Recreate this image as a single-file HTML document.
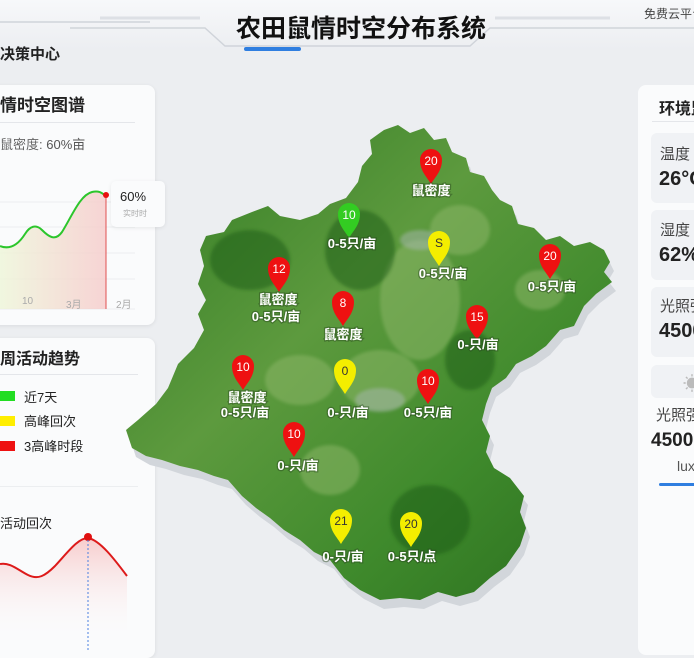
<!DOCTYPE html>
<html><head><meta charset="utf-8"><style>
*{margin:0;padding:0;box-sizing:border-box}
body{width:694px;height:650px;overflow:hidden;background:#eceef1;font-family:"Liberation Sans","Noto Sans CJK SC",sans-serif;position:relative;color:#222}
.abs{position:absolute;white-space:nowrap}
.card{position:absolute;background:#fafbfc;border-radius:8px;box-shadow:0 1px 4px rgba(0,0,0,.08)}
.t{font-weight:bold}
#rp{position:absolute;left:638px;top:85px;width:56px;height:570px;overflow:hidden}
#rp div{position:absolute;white-space:nowrap}
</style></head><body>
<!-- header -->
<div class="abs" style="left:0;top:0;width:694px;height:50px;background:linear-gradient(#f7f8fa,#eceef1)"></div>
<svg class="abs" style="left:0;top:0" width="694" height="60">
<path d="M0 22 H150 M70 28 H205 L225 46 H470 L490 28 H694" fill="none" stroke="#d0d4da" stroke-width="1.5"/>
<path d="M100 18 H200 M495 18 H610" stroke="#dde0e5" stroke-width="3"/>
<rect x="244" y="47" width="57" height="4" rx="2" fill="#2f7ee0"/>
</svg>
<div class="abs t" style="left:236px;top:9px;font-size:25px;color:#111">农田鼠情时空分布系统</div>
<div class="abs" style="left:644px;top:5px;font-size:12px;color:#444">免费云平台</div>
<div class="abs t" style="left:0;top:43px;font-size:15px">决策中心</div>

<!-- left card 1 -->
<div class="card" style="left:-10px;top:85px;width:165px;height:240px"></div>
<div class="abs t" style="left:0;top:91px;font-size:17px">情时空图谱</div>
<div class="abs" style="left:0;top:122px;width:135px;height:1px;background:#e4e6ea"></div>
<div class="abs" style="left:0;top:134px;font-size:13px;color:#666">鼠密度: <span style="color:#555">60%亩</span></div>
<svg class="abs" style="left:0;top:180px" width="160" height="130">
<defs><linearGradient id="g1" x1="0" x2="1"><stop offset="0" stop-color="#eef6d8"/><stop offset="1" stop-color="#f6caca"/></linearGradient></defs>
<g stroke="#eceef0"><line x1="0" y1="22" x2="135" y2="22"/><line x1="0" y1="47" x2="135" y2="47"/><line x1="0" y1="73" x2="135" y2="73"/><line x1="0" y1="99" x2="135" y2="99"/><line x1="0" y1="129" x2="135" y2="129"/></g>
<path d="M0 66 C10 70 18 65 25 54 C30 46 36 44 42 50 C48 56 55 62 62 52 C72 36 80 15 92 12 C100 10 103 14 106 16 V129 H0Z" fill="url(#g1)" opacity=".8"/>
<path d="M0 66 C10 70 18 65 25 54 C30 46 36 44 42 50 C48 56 55 62 62 52 C72 36 80 15 92 12 C100 10 103 14 106 16" fill="none" stroke="#2cc62c" stroke-width="2"/>
<line x1="106" y1="16" x2="106" y2="129" stroke="#e05050"/>
<circle cx="106" cy="15" r="3" fill="#e81010"/>
</svg>
<div class="card" style="left:111px;top:181px;width:54px;height:46px;border-radius:5px"></div>
<div class="abs" style="left:120px;top:189px;font-size:13px">60%</div>
<div class="abs" style="left:123px;top:208px;font-size:8px;color:#aaa">实时时</div>
<div class="abs" style="left:22px;top:296px;font-size:10px;color:#aaa">10</div>
<div class="abs" style="left:66px;top:296px;font-size:10px;color:#aaa">3月</div>
<div class="abs" style="left:116px;top:296px;font-size:10px;color:#aaa">2月</div>

<!-- left card 2 -->
<div class="card" style="left:-10px;top:338px;width:165px;height:320px"></div>
<div class="abs t" style="left:0;top:345px;font-size:16px">周活动趋势</div>
<div class="abs" style="left:0;top:374px;width:138px;height:1px;background:#e4e6ea"></div>
<div class="abs" style="left:0;top:391px;width:15px;height:10px;background:#22dd22"></div>
<div class="abs" style="left:24px;top:387px;font-size:13px">近7天</div>
<div class="abs" style="left:0;top:416px;width:15px;height:10px;background:#ffee00"></div>
<div class="abs" style="left:24px;top:411px;font-size:13px">高峰回次</div>
<div class="abs" style="left:0;top:441px;width:15px;height:10px;background:#ee1111"></div>
<div class="abs" style="left:24px;top:436px;font-size:13px">3高峰时段</div>
<div class="abs" style="left:0;top:486px;width:138px;height:1px;background:#eceef0"></div>
<div class="abs" style="left:0;top:513px;font-size:13px">活动回次</div>
<svg class="abs" style="left:0;top:530px" width="140" height="120">
<defs><linearGradient id="g2" x1="0" y1="0" x2="0" y2="1"><stop offset="0" stop-color="#f8cccc"/><stop offset="1" stop-color="#fafbfc" stop-opacity="0"/></linearGradient></defs>
<path d="M0 34 C10 32 18 40 28 45 C38 50 45 46 55 36 C68 22 78 8 88 8 C100 10 115 30 127 46 V110 H0Z" fill="url(#g2)"/>
<path d="M0 34 C10 32 18 40 28 45 C38 50 45 46 55 36 C68 22 78 8 88 8 C100 10 115 30 127 46" fill="none" stroke="#dd1a1a" stroke-width="2"/>
<circle cx="88" cy="7" r="4" fill="#e01010"/>
<line x1="88" y1="10" x2="88" y2="120" stroke="#4a80e0" stroke-dasharray="2 2"/>
</svg>

<!-- right panel -->
<div id="rp">
<div style="left:0;top:0;width:70px;height:570px;background:#fafbfc;border-radius:8px"></div>
<div class="t" style="left:21px;top:10px;font-size:16px">环境监测</div>
<div style="left:14px;top:36px;width:60px;height:1px;background:#e4e6ea"></div>
<div style="left:13px;top:48px;width:60px;height:70px;background:#f0f2f5;border-radius:6px"></div>
<div style="left:22px;top:58px;font-size:15px;color:#444">温度</div>
<div class="t" style="left:21px;top:83px;font-size:20px">26°C</div>
<div style="left:13px;top:125px;width:60px;height:70px;background:#f0f2f5;border-radius:6px"></div>
<div style="left:22px;top:134px;font-size:15px;color:#444">湿度</div>
<div class="t" style="left:21px;top:159px;font-size:20px">62%</div>
<div style="left:13px;top:202px;width:60px;height:70px;background:#f0f2f5;border-radius:6px"></div>
<div style="left:22px;top:210px;font-size:15px;color:#444">光照强度</div>
<div class="t" style="left:21px;top:235px;font-size:20px">4500</div>
<div style="left:13px;top:280px;width:60px;height:33px;background:#f0f2f5;border-radius:6px"></div>
<div style="left:45px;top:285px;font-size:18px;color:#bbb">☀</div>
<div style="left:18px;top:319px;font-size:15px;color:#444">光照强度</div>
<div class="t" style="left:13px;top:345px;font-size:19px">4500</div>
<div style="left:39px;top:373px;font-size:14px;color:#555">lux</div>
<div style="left:21px;top:398px;width:40px;height:3px;background:#2f7ee0;border-radius:2px"></div>
</div>

<!-- map -->
<svg class="abs" style="left:0;top:0" width="694" height="650">
<defs>
<linearGradient id="mg" x1="0" y1="0" x2="1" y2="1"><stop offset="0" stop-color="#2f7a22"/><stop offset=".4" stop-color="#5d9a3e"/><stop offset=".7" stop-color="#3f8a2c"/><stop offset="1" stop-color="#2a6e1e"/></linearGradient>
<filter id="sh"><feGaussianBlur stdDeviation="1.5"/></filter>
<path id="outl" d="M398 125 L410 133 L424 128 L434 140 L446 138 L452 152 L466 158 L470 172 L484 176 L492 190 L500 200 L512 206 L518 224 L534 228 L546 240 L560 236 L574 246 L590 242 L604 250 L610 262 L604 272 L612 282 L596 294 L584 306 L574 326 L560 330 L546 346 L532 356 L516 364 L506 378 L492 388 L486 404 L482 420 L490 436 L486 452 L494 468 L510 478 L524 496 L520 512 L526 528 L520 546 L506 566 L490 578 L474 592 L456 597 L438 592 L420 600 L400 598 L380 600 L360 590 L344 578 L330 560 L314 552 L300 540 L284 530 L270 518 L256 508 L242 496 L228 480 L214 476 L198 470 L180 466 L162 460 L146 456 L132 448 L126 430 L138 420 L156 404 L168 388 L178 364 L194 348 L204 330 L198 314 L206 300 L198 284 L204 266 L200 250 L206 236 L224 232 L232 220 L252 212 L268 206 L280 216 L300 220 L318 214 L330 204 L346 198 L358 182 L362 166 L372 154 L370 140 L384 130Z"/>
</defs>
<use href="#outl" fill="#d2d6db" transform="translate(4,9)"/>
<use href="#outl" fill="url(#mg)"/>
<g fill="#8fb86a" opacity=".5" filter="url(#sh)">
<ellipse cx="420" cy="300" rx="40" ry="60"/><ellipse cx="380" cy="380" rx="40" ry="30"/><ellipse cx="460" cy="230" rx="30" ry="25"/><ellipse cx="300" cy="380" rx="35" ry="25"/><ellipse cx="540" cy="290" rx="25" ry="20"/><ellipse cx="330" cy="470" rx="30" ry="25"/>
</g>
<g fill="#a8b8b0" opacity=".5" filter="url(#sh)"><ellipse cx="380" cy="400" rx="25" ry="12"/><ellipse cx="420" cy="240" rx="20" ry="10"/></g>
<g fill="#1f5c16" opacity=".5" filter="url(#sh)"><ellipse cx="250" cy="260" rx="40" ry="30"/><ellipse cx="360" cy="250" rx="35" ry="40"/><ellipse cx="430" cy="520" rx="40" ry="35"/><ellipse cx="470" cy="360" rx="25" ry="30"/></g>
</svg>
<svg class="abs" style="left:0;top:0" width="694" height="650" font-family="Liberation Sans,Noto Sans CJK SC,sans-serif">
<defs><g id="pin"><path d="M0 24 C-4 17 -11 11 -11 0 A11 11 0 0 1 11 0 C11 11 4 17 0 24Z"/></g></defs>
<g font-size="12" text-anchor="middle">
<use href="#pin" x="431" y="160" fill="#ee1111"/><text x="431" y="165" fill="#fff">20</text>
<use href="#pin" x="349" y="214" fill="#33cc22"/><text x="349" y="219" fill="#fff">10</text>
<use href="#pin" x="439" y="242" fill="#f4ee00"/><text x="439" y="247" fill="#333">S</text>
<use href="#pin" x="550" y="255" fill="#ee1111"/><text x="550" y="260" fill="#fff">20</text>
<use href="#pin" x="279" y="268" fill="#ee1111"/><text x="279" y="273" fill="#fff">12</text>
<use href="#pin" x="343" y="302" fill="#ee1111"/><text x="343" y="307" fill="#fff">8</text>
<use href="#pin" x="477" y="316" fill="#ee1111"/><text x="477" y="321" fill="#fff">15</text>
<use href="#pin" x="243" y="366" fill="#ee1111"/><text x="243" y="371" fill="#fff">10</text>
<use href="#pin" x="345" y="370" fill="#f4ee00"/><text x="345" y="375" fill="#333">0</text>
<use href="#pin" x="428" y="380" fill="#ee1111"/><text x="428" y="385" fill="#fff">10</text>
<use href="#pin" x="294" y="433" fill="#ee1111"/><text x="294" y="438" fill="#fff">10</text>
<use href="#pin" x="411" y="523" fill="#f4ee00"/><text x="411" y="528" fill="#333">20</text>
<use href="#pin" x="341" y="520" fill="#f4ee00"/><text x="341" y="525" fill="#333">21</text>
</g>
<g font-size="13" font-weight="bold" text-anchor="middle" fill="#fff" stroke="#2a4a20" stroke-width="2.5" paint-order="stroke" stroke-opacity=".45">
<text x="431" y="195">鼠密度</text>
<text x="352" y="248">0-5只/亩</text>
<text x="443" y="278">0-5只/亩</text>
<text x="552" y="291">0-5只/亩</text>
<text x="278" y="304">鼠密度</text>
<text x="276" y="321">0-5只/亩</text>
<text x="343" y="339">鼠密度</text>
<text x="478" y="349">0-只/亩</text>
<text x="247" y="402">鼠密度</text>
<text x="245" y="417">0-5只/亩</text>
<text x="348" y="417">0-只/亩</text>
<text x="428" y="417">0-5只/亩</text>
<text x="298" y="470">0-只/亩</text>
<text x="412" y="561">0-5只/点</text>
<text x="343" y="561">0-只/亩</text>
</g>
</svg>
</body></html>
